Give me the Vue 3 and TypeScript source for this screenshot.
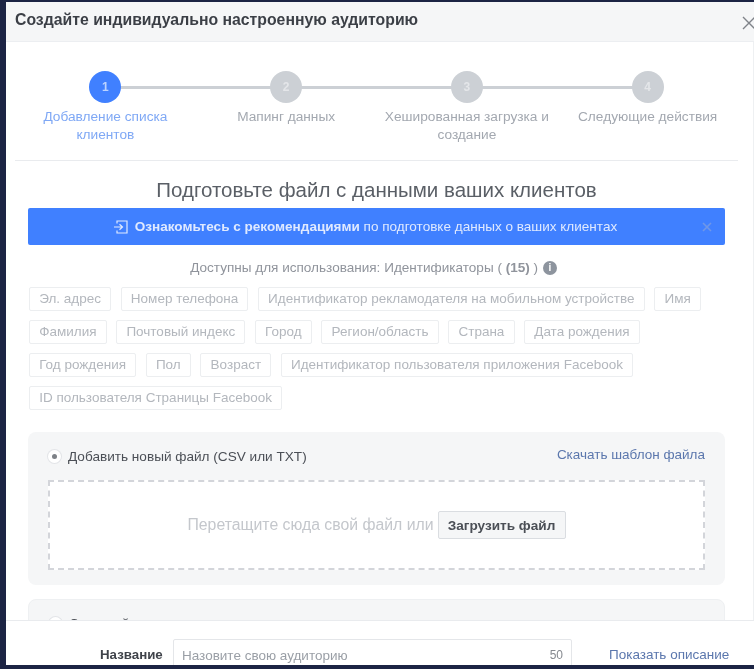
<script setup lang="ts">
const steps = [
  { n: 1, label: 'Добавление списка клиентов', active: true },
  { n: 2, label: 'Мапинг данных', active: false },
  { n: 3, label: 'Хешированная загрузка и создание', active: false },
  { n: 4, label: 'Следующие действия', active: false },
]

const chipRows = [
  ['Эл. адрес', 'Номер телефона', 'Идентификатор рекламодателя на мобильном устройстве', 'Имя'],
  ['Фамилия', 'Почтовый индекс', 'Город', 'Регион/область', 'Страна', 'Дата рождения'],
  ['Год рождения', 'Пол', 'Возраст', 'Идентификатор пользователя приложения Facebook'],
  ['ID пользователя Страницы Facebook'],
]
</script>

<template>
  <div class="page">
    <div class="modal">
      <header class="modal_head">
        <h1>Создайте индивидуально настроенную аудиторию</h1>
        <svg class="close" width="14" height="14" viewBox="0 0 14 14">
          <path d="M1 1L13 13M13 1L1 13" stroke="#7f8389" stroke-width="1.4" fill="none" />
        </svg>
      </header>

      <div class="modal_body">
        <ol class="steps">
          <li v-for="step in steps" :key="step.n" class="step" :class="{ active: step.active }">
            <div class="step_circle">{{ step.n }}</div>
            <div class="step_label">{{ step.label }}</div>
          </li>
        </ol>

        <h2 class="title">Подготовьте файл с данными ваших клиентов</h2>

        <div class="banner">
          <svg class="banner_icon" width="16" height="16" viewBox="0 0 16 16" fill="none" stroke="#dfe9ff" stroke-width="1.2">
            <path d="M4 4.5V2h10v12H4v-2.5" />
            <path d="M1 8h8M6.5 5.2L9.5 8l-3 2.8" />
          </svg>
          <span><b>Ознакомьтесь с рекомендациями</b> по подготовке данных о ваших клиентах</span>
          <svg class="banner_close" width="10" height="10" viewBox="0 0 10 10">
            <path d="M1 1L9 9M9 1L1 9" stroke="#6f97e8" stroke-width="1.6" fill="none" />
          </svg>
        </div>

        <div class="available">
          Доступны для использования: Идентификаторы ( <b>(15)</b> )
          <span class="info">i</span>
        </div>

        <div class="chips">
          <div v-for="(row, i) in chipRows" :key="i" class="chip_row">
            <span v-for="chip in row" :key="chip" class="chip">{{ chip }}</span>
          </div>
        </div>

        <section class="panel">
          <div class="panel_top">
            <label class="radio_row">
              <span class="radio checked"></span>
              Добавить новый файл (CSV или TXT)
            </label>
            <a class="link">Скачать шаблон файла</a>
          </div>
          <div class="dropzone">
            <span>Перетащите сюда свой файл или</span>
            <button class="upload">Загрузить файл</button>
          </div>
        </section>

        <section class="panel second">
          <label class="radio_row">
            <span class="radio"></span>
            Скопируйте и вставьте данные
          </label>
        </section>
      </div>

      <footer class="modal_foot">
        <span class="foot_label">Название</span>
        <div class="name_input">
          <span>Назовите свою аудиторию</span>
          <span class="count">50</span>
        </div>
        <a class="link foot_link">Показать описание</a>
      </footer>
    </div>
  </div>
</template>

<style scoped>
.page {
  height: 669px;
  box-sizing: border-box;
  padding: 2px 0 4px 6px;
  background: #1c2444;
  overflow: hidden;
  font-family: "Liberation Sans", Arial, sans-serif;
  color: #8d949e;
}
.modal {
  display: flex;
  flex-direction: column;
  height: 100%;
  background: #fff;
  overflow: hidden;
  filter: blur(0.45px);
}

.modal_head {
  flex: none;
  display: flex;
  align-items: center;
  justify-content: space-between;
  height: 40px;
  padding: 0 0 3px 9px;
  background: #f5f6f7;
  border-bottom: 1px solid #eceef1;
  box-sizing: border-box;
}
.modal_head h1 {
  margin: 0;
  font-size: 15.8px;
  font-weight: 700;
  color: #3b3f46;
}
.close {
  margin-right: -2px;
  margin-top: 6px;
}

.modal_body {
  flex: 1;
  min-height: 0;
  overflow: hidden;
  padding: 0 15px 0 9px;
  border-right: 1px solid #eef0f2;
}

.steps {
  display: grid;
  grid-template-columns: repeat(4, 1fr);
  margin: 0;
  padding: 29px 0 16px;
  list-style: none;
  border-bottom: 1px solid #e9ebee;
}
.step {
  position: relative;
  display: flex;
  flex-direction: column;
  align-items: center;
  text-align: center;
}
.step:not(:last-child)::after {
  content: "";
  position: absolute;
  top: 15px;
  left: 50%;
  width: 100%;
  height: 3px;
  background: #ccd0d5;
}
.step_circle {
  position: relative;
  z-index: 1;
  width: 32px;
  height: 32px;
  border-radius: 50%;
  background: #ccd0d5;
  color: #e4e6e9;
  font-size: 12px;
  font-weight: 700;
  line-height: 32px;
}
.step_label {
  margin-top: 5px;
  max-width: 172px;
  font-size: 13.7px;
  line-height: 18px;
  color: #a3a8b0;
}
.active .step_circle {
  background: #4080ff;
  color: #bcd3ff;
}
.active .step_label {
  max-width: 135px;
  color: #7fa8f5;
}

.title {
  margin: 18px 0 0;
  font-size: 20.5px;
  font-weight: 400;
  line-height: 22px;
  text-align: center;
  color: #5a5f66;
}

.banner {
  position: relative;
  display: flex;
  align-items: center;
  justify-content: center;
  gap: 6px;
  height: 37px;
  margin: 7px 13px 0;
  padding-right: 23px;
  border-radius: 2px;
  background: #4080ff;
  color: #dfe9ff;
  font-size: 13.55px;
}
.banner_close {
  position: absolute;
  right: 13px;
  top: 14px;
}

.available {
  margin-top: 15px;
  padding-right: 6px;
  font-size: 13.55px;
  line-height: 16px;
  text-align: center;
  color: #90949c;
}
.info {
  display: inline-block;
  width: 14px;
  height: 14px;
  margin-left: 1px;
  border-radius: 50%;
  background: #8d949e;
  color: #fff;
  font-size: 10px;
  font-weight: 700;
  line-height: 14px;
  text-align: center;
  vertical-align: 1px;
}

.chips {
  display: flex;
  flex-direction: column;
  gap: 9px;
  margin: 11px 13px 0 14px;
}
.chip_row {
  display: flex;
  gap: 9.5px;
}
.chip {
  height: 24px;
  box-sizing: border-box;
  padding: 0 9.2px;
  border: 1px solid #eceef0;
  border-radius: 2px;
  font-size: 13.5px;
  line-height: 22px;
  white-space: nowrap;
  color: #b3b7bd;
}

.panel {
  margin: 22px 13px 0;
  padding: 15px 20px;
  border-radius: 8px;
  background: #f5f6f7;
}
.panel_top {
  display: flex;
  align-items: flex-start;
  justify-content: space-between;
  height: 33px;
}
.radio_row {
  display: flex;
  align-items: center;
  gap: 7px;
  height: 18px;
  font-size: 13.6px;
  white-space: nowrap;
  color: #4b4f56;
}
.radio {
  position: relative;
  width: 13px;
  height: 13px;
  border-radius: 50%;
  background: #fff;
  box-shadow: 0 0 0 1px #e3e5e8;
}
.radio.checked::after {
  content: "";
  position: absolute;
  left: 4px;
  top: 4px;
  width: 5px;
  height: 5px;
  border-radius: 50%;
  background: #7d8187;
}
.link {
  font-size: 13.5px;
  line-height: 16px;
  white-space: nowrap;
  color: #5b77ad;
}
.dropzone {
  display: flex;
  align-items: center;
  justify-content: center;
  gap: 4px;
  height: 90px;
  box-sizing: border-box;
  border: 2px dashed #d3d5da;
  background: #fff;
  font-size: 15.8px;
  color: #c4c7cc;
}
.upload {
  width: 128px;
  height: 28px;
  padding: 0;
  border: 1px solid #dadde1;
  border-radius: 2px;
  background: #f5f6f7;
  font-family: inherit;
  font-size: 13.6px;
  font-weight: 700;
  color: #4b4f56;
}

.second {
  margin-top: 14px;
  border: 1px solid #eef0f2;
  padding-top: 14px;
}

.modal_foot {
  flex: none;
  position: relative;
  z-index: 1;
  display: flex;
  align-items: flex-start;
  height: 45px;
  box-sizing: border-box;
  padding: 18px 0 0 94px;
  background: #fff;
  border-top: 1px solid #e9ebee;
}
.foot_label {
  width: 63px;
  margin-top: 8px;
  font-size: 13.3px;
  font-weight: 700;
  white-space: nowrap;
  color: #3f434a;
}
.name_input {
  display: flex;
  justify-content: space-between;
  width: 399px;
  height: 30px;
  box-sizing: border-box;
  margin-left: 10px;
  padding: 8px 8px 0 8px;
  border: 1px solid #e4e6e9;
  border-radius: 2px;
  font-size: 13.5px;
  color: #9a9fa6;
}
.count {
  font-size: 12px;
  color: #85898f;
}
.foot_link {
  margin: 8px 0 0 37px;
}
</style>

<style>
html, body {
  margin: 0;
  background: #1c2444;
}
</style>
